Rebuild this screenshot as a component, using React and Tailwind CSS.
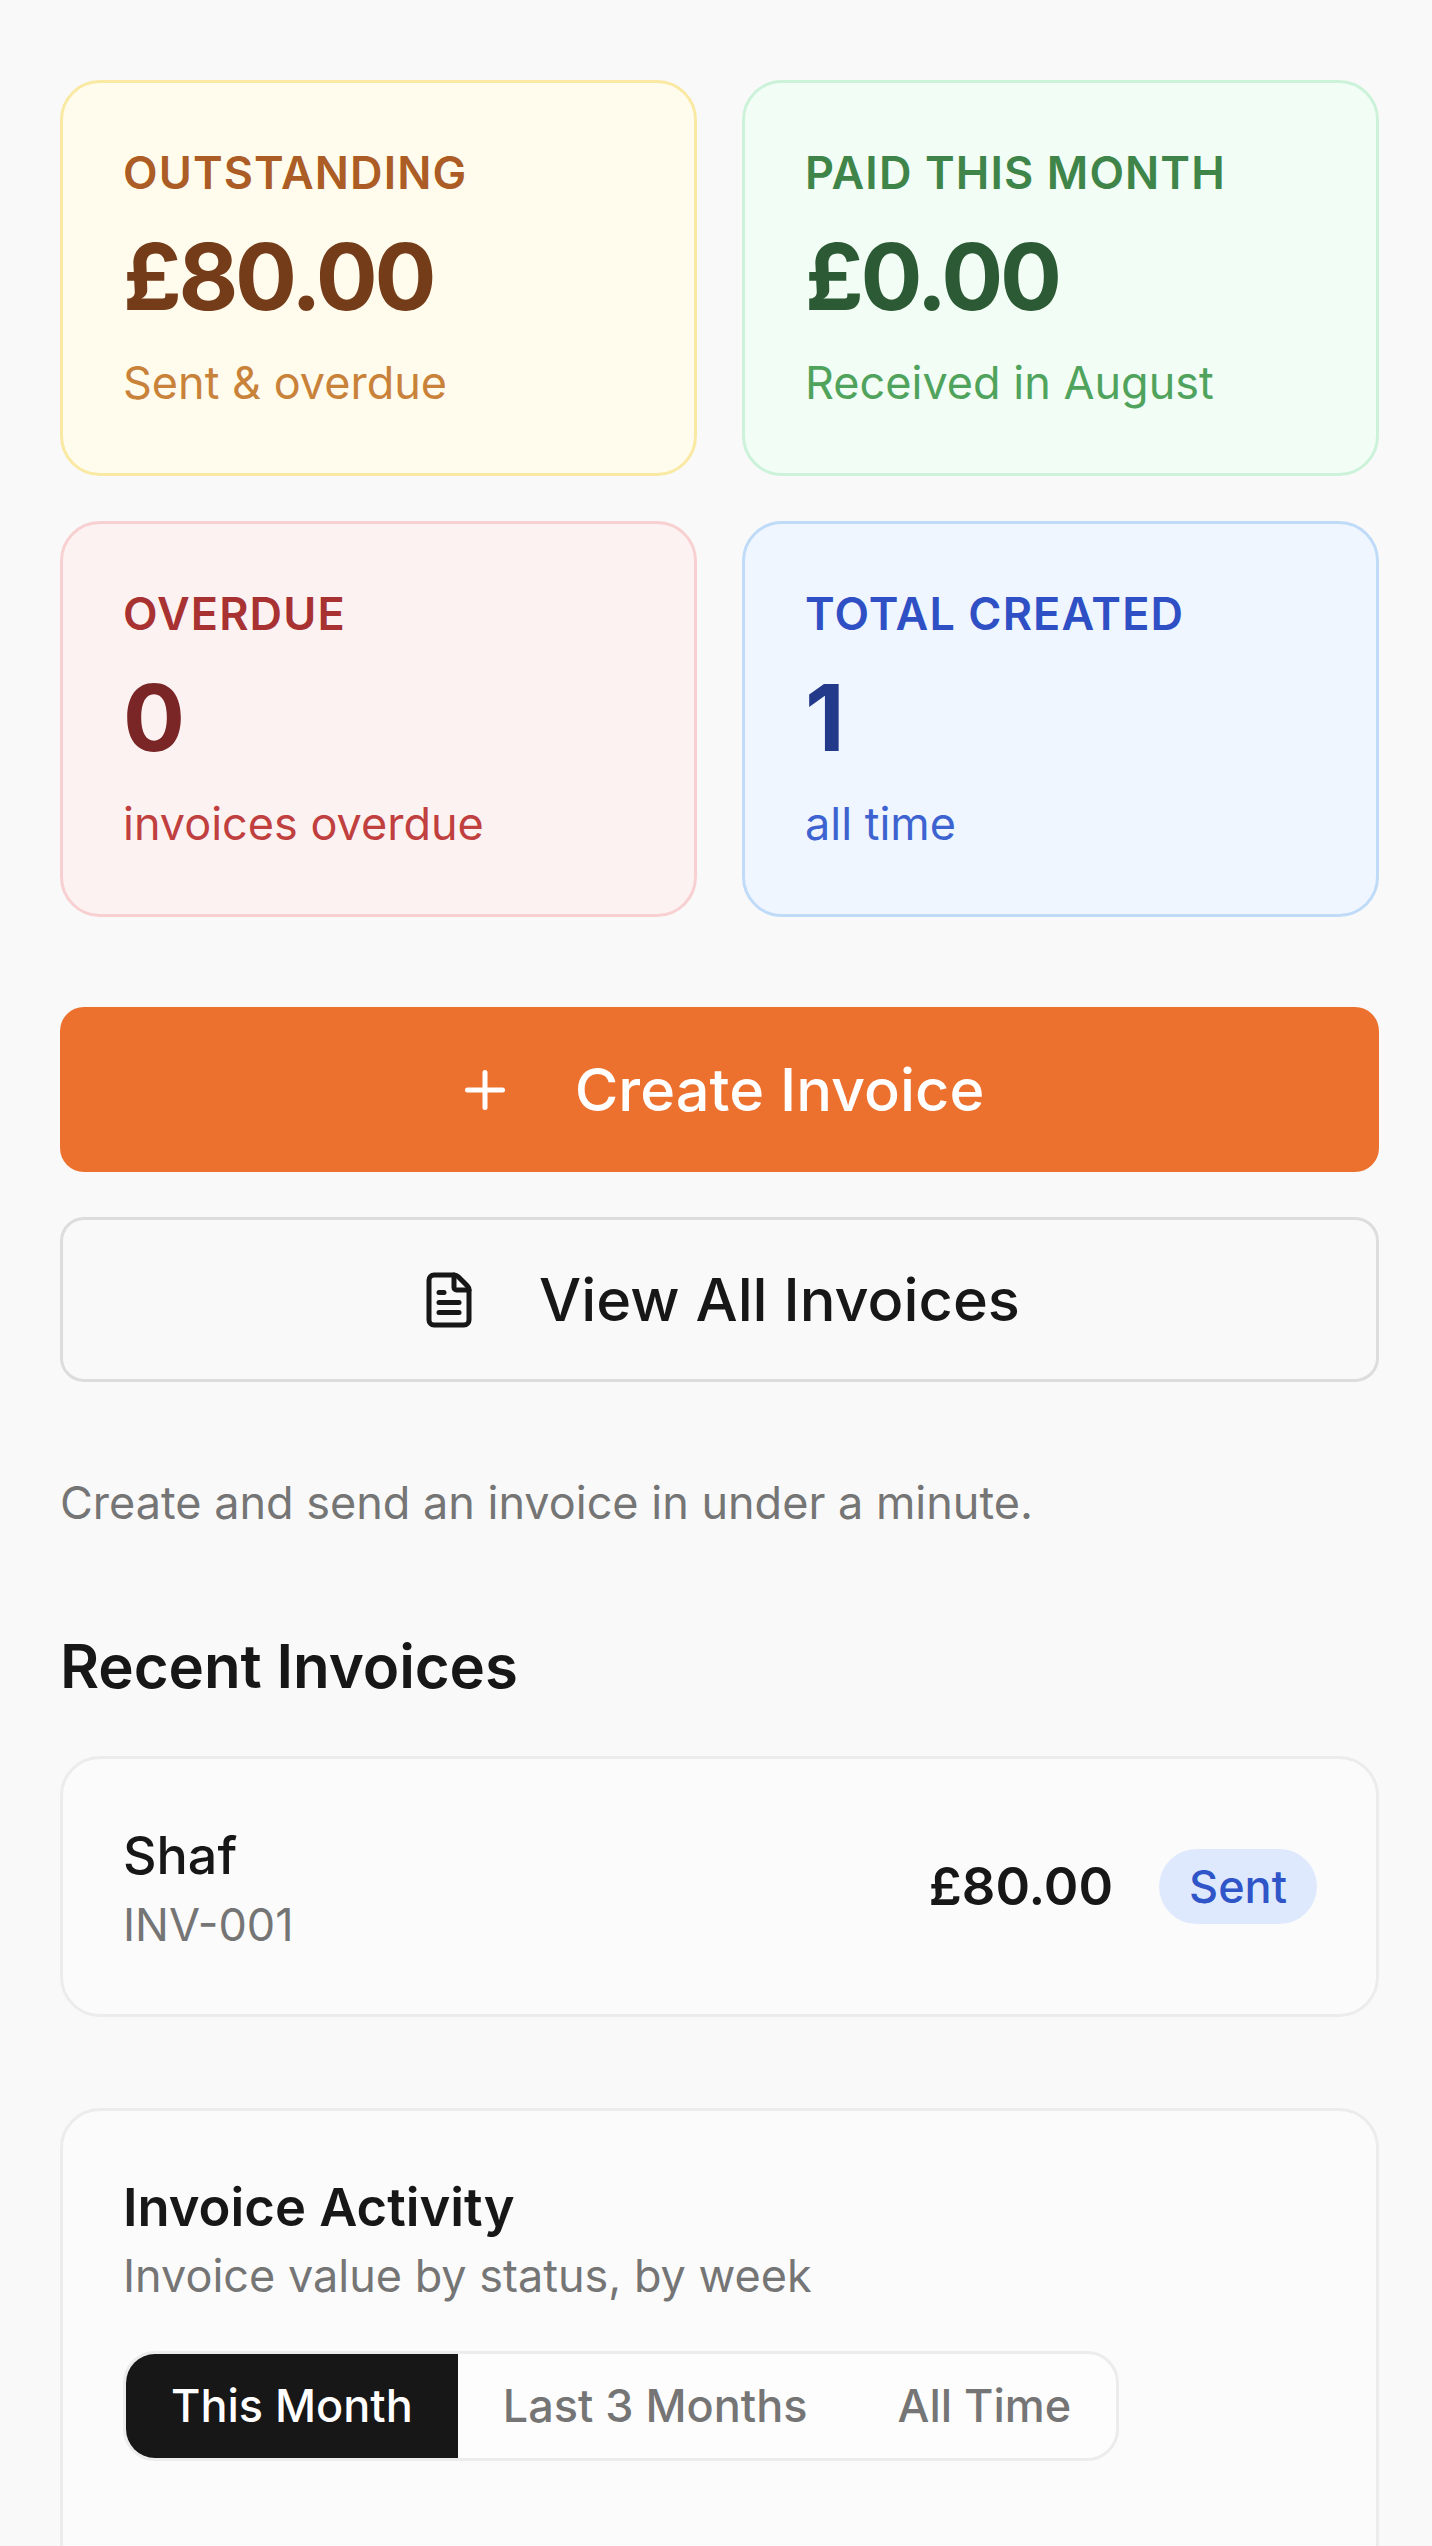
import React from "react";
import { Plus, FileText } from "lucide-react";

function Stat({ label, value, sub, card, labelC, valueC, subC }) {
  return (
    <div className={`h-[396px] rounded-[40px] border-[3px] px-[60px] pt-[62px] ${card}`}>
      <div className={`text-[45px] leading-[56px] font-semibold tracking-[1.1px] whitespace-nowrap ${labelC}`}>{label}</div>
      <div className={`mt-[21px] text-[92px] leading-[110px] font-bold tracking-[-3.3px] ${valueC}`}>{value}</div>
      <div className={`mt-[21px] text-[45px] leading-[60px] whitespace-nowrap ${subC}`}>{sub}</div>
    </div>
  );
}

export default function App() {
  return (
    <div className="h-[2546px] overflow-hidden bg-[#f9f9f9] pl-[60px] pr-[53px] pt-[80px] font-['Inter',sans-serif] text-[#171717]">
      <div className="grid grid-cols-[637px_1fr] gap-x-[45px] gap-y-[45px]">
        <Stat label="OUTSTANDING" value="£80.00" sub="Sent & overdue" card="border-[#f9e9a3] bg-[#fffcee]" labelC="text-[#ab5d25]" valueC="text-[#753c1a]" subC="text-[#c9823a]" />
        <Stat label="PAID THIS MONTH" value="£0.00" sub="Received in August" card="border-[#ccf2d9] bg-[#f1fdf5]" labelC="text-[#3f8549]" valueC="text-[#2c5a34]" subC="text-[#50a35c]" />
        <Stat label="OVERDUE" value="0" sub="invoices overdue" card="border-[#f8d0d1] bg-[#fdf2f2]" labelC="text-[#a83232]" valueC="text-[#7a2626]" subC="text-[#c03f3f]" />
        <Stat label="TOTAL CREATED" value="1" sub="all time" card="border-[#bfdbf8] bg-[#eff6ff]" labelC="text-[#2f4fc4]" valueC="text-[#233a8a]" subC="text-[#3d63d0]" />
      </div>

      <button className="mt-[90px] flex h-[165px] w-full items-center justify-center gap-[60px] rounded-[24px] bg-[#ed712e] text-[59.5px] font-medium text-white">
        <Plus size={60} strokeWidth={2} />
        <span>Create Invoice</span>
      </button>
      <button className="mt-[45px] flex h-[165px] w-full items-center justify-center gap-[60px] rounded-[24px] border-[3px] border-[#dddddd] text-[59.5px] font-medium text-[#171717]">
        <FileText size={60} strokeWidth={2} />
        <span>View All Invoices</span>
      </button>

      <p className="mt-[91px] text-[45px] leading-[60px] text-[#757575]">Create and send an invoice in under a minute.</p>

      <h2 className="mt-[93px] text-[60px] leading-[80px] font-semibold tracking-[-0.1px]">Recent Invoices</h2>

      <div className="mt-[50px] flex h-[261px] items-center justify-between rounded-[40px] border-[3px] border-[#ececec] bg-[#fbfbfb] pl-[60px] pr-[59px]">
        <div className="pt-[3px]">
          <div className="text-[52px] leading-[68px] font-medium">Shaf</div>
          <div className="mt-[5px] text-[45px] leading-[60px] text-[#757575]">INV-001</div>
        </div>
        <div className="flex items-center gap-[46px]">
          <div className="text-[52.5px] font-semibold">£80.00</div>
          <div className="rounded-full bg-[#dfe9fd] px-[30px] py-[9px] text-[45px] leading-[57px] font-medium text-[#2f55c8]">Sent</div>
        </div>
      </div>

      <div className="mt-[91px] h-[600px] rounded-[40px] border-[3px] border-[#ececec] bg-[#fbfbfb] px-[60px] pt-[62px]">
        <h3 className="text-[52.5px] leading-[68px] font-semibold">Invoice Activity</h3>
        <p className="mt-[5px] text-[45px] leading-[60px] text-[#757575]">Invoice value by status, by week</p>
        <div className="mt-[45px] flex h-[110px] w-fit items-stretch overflow-hidden rounded-[32px] border-[3px] border-[#ececec] bg-[#fdfdfd] text-[45px] font-medium text-[#757575]">
          <div className="flex items-center bg-[#171717] px-[45px] text-white">This Month</div>
          <div className="flex items-center px-[45px]">Last 3 Months</div>
          <div className="flex items-center px-[45px]">All Time</div>
        </div>
      </div>
    </div>
  );
}
